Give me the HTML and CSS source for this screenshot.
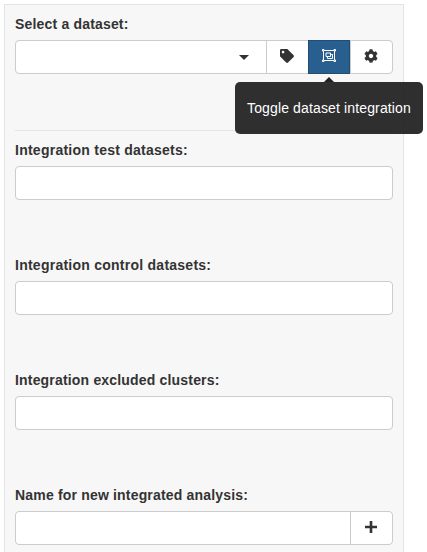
FILE: index.html
```html
<!DOCTYPE html>
<html lang="en">
<head>
<meta charset="utf-8">
<title>Datasets</title>
<link rel="stylesheet" href="styles.css">
</head>
<body>
<form class="well">
  <div class="group first">
    <label>Select a dataset:</label>
    <div class="control">
      <div class="field select"><svg class="caret" viewBox="0 0 10 5"><path d="M0 0h10L5 5z"/></svg></div>
      <button type="button" class="btn" aria-label="Label"><svg width="14" height="14" viewBox="0 0 512 512"><path d="M0 252.1V48C0 21.5 21.5 0 48 0h204.100c12.700 0 24.900 5.100 33.900 14.100l211.900 211.900c18.700 18.700 18.700 49.100 0 67.900L293.800 497.900c-18.700 18.700-49.100 18.700-67.900 0L14.100 286.100C5.100 277.100 0 264.800 0 252.100zM112 64c-26.500 0-48 21.500-48 48s21.500 48 48 48 48-21.500 48-48-21.500-48-48-48z"/></svg></button>
      <button type="button" class="btn active" aria-label="Integration">
        <svg class="object" width="14" height="13" viewBox="0 0 14 13"><path d="M1.500 1.500h11v10h-11zM4 4h4.500v3.500H4zM8.500 5.500h2v4h-5v-2"/><path class="corners" d="M.5.5h1.500v1.500h-1.500zM12 .5h1.500v1.500h-1.500zM.5 11h1.500v1.500h-1.500zM12 11h1.500v1.500h-1.500z"/></svg>
        <span class="tooltip">Toggle dataset integration</span>
      </button>
      <button type="button" class="btn last" aria-label="Settings"><svg width="14" height="14" viewBox="0 0 512 512"><path d="M487.400 315.700l-42.600-24.600c4.300-23.200 4.300-47 0-70.200l42.600-24.600c4.900-2.800 7.100-8.600 5.500-14-11.100-35.600-30-67.800-54.700-94.600-3.800-4.100-10-5.100-14.800-2.300L380.800 110c-17.900-15.400-38.500-27.300-60.800-35.100V25.800c0-5.600-3.900-10.500-9.400-11.700-36.700-8.200-74.300-7.800-109.200 0-5.500 1.200-9.400 6.100-9.400 11.700V75c-22.200 7.900-42.800 19.800-60.800 35.100L88.700 85.500c-4.900-2.800-11-1.900-14.800 2.300-24.700 26.700-43.600 58.900-54.700 94.600-1.700 5.400.6 11.200 5.500 14L67.300 221c-4.300 23.200-4.300 47 0 70.200l-42.600 24.600c-4.900 2.800-7.100 8.600-5.500 14 11.100 35.600 30 67.800 54.700 94.600 3.800 4.100 10 5.100 14.800 2.300l42.600-24.600c17.900 15.400 38.500 27.300 60.800 35.100v49.200c0 5.600 3.900 10.500 9.400 11.700 36.700 8.200 74.300 7.800 109.200 0 5.500-1.200 9.400-6.100 9.400-11.700v-49.200c22.200-7.900 42.800-19.800 60.800-35.100l42.600 24.600c4.900 2.800 11 1.900 14.800-2.300 24.700-26.700 43.600-58.900 54.700-94.600 1.500-5.500-.7-11.300-5.600-14.100zM256 336c-44.100 0-80-35.900-80-80s35.900-80 80-80 80 35.900 80 80-35.900 80-80 80z"/></svg></button>
    </div>
  </div>
  <hr>
  <div class="group"><label class="wide">Integration test datasets:</label><div class="control"><div class="field full"></div></div></div>
  <div class="group"><label class="wide">Integration control datasets:</label><div class="control"><div class="field full"></div></div></div>
  <div class="group"><label>Integration excluded clusters:</label><div class="control"><div class="field full"></div></div></div>
  <div class="group end"><label>Name for new integrated analysis:</label><div class="control"><div class="field"></div><button type="button" class="btn last" aria-label="Add"><svg class="plus" width="12" height="12" viewBox="0 0 12 12"><path d="M4.700 0h2.600v4.700H12v2.600H7.300V12H4.700V7.300H0V4.700h4.700z"/></svg></button></div></div>
</form>
</body>
</html>
```
FILE: styles.css
```css
* { box-sizing: border-box; }
html { overflow: hidden; background: #fff; }
body { margin: 4px 4px 0; font: 14px/20px "Liberation Sans", sans-serif; color: #333; }
.well { width: 400px; height: 548px; padding: 10px 10px 0; background: #f7f7f7; border: 1px solid #e3e3e3; border-bottom: 0; }
.group { height: 115px; }
.first { height: 90px; }
.end { height: 60px; }
hr { margin: 25px 0 10px; border: 0; border-top: 1px solid #e5e5e5; }
label { display: block; height: 25px; font-weight: bold; line-height: 18px; letter-spacing: 0.18px; white-space: nowrap; }
.wide { letter-spacing: 0.25px; }
.control { display: flex; width: 378px; height: 34px; }
.field { flex: 1; background: #fff; border: 1px solid #ccc; border-radius: 4px 0 0 4px; }
.full { border-radius: 4px; }
.select { display: flex; justify-content: flex-end; align-items: center; padding-right: 17px; }
.caret { width: 10px; height: 5px; }
.btn { position: relative; display: flex; justify-content: center; align-items: center; width: 43px; margin-left: -1px; padding: 0 2px 2px 0; background: #fff; border: 1px solid #ccc; font: inherit; }
.last { border-radius: 0 4px 4px 0; }
.active { z-index: 1; width: 42px; margin-right: 1px; padding: 0; background: #285f8f; border-color: #204d74; }
svg { display: block; fill: #333; }
.object { margin-top: -3px; fill: none; stroke: #fff; stroke-width: 1; }
.object .corners { fill: #285f8f; }
.tooltip { position: absolute; top: 41px; left: -74px; width: 188px; height: 52px; padding: 16px 12px; border-radius: 5px; background: rgba(24, 24, 24, .9); color: #fff; font-size: 14px; letter-spacing: 0.14px; line-height: 20px; text-align: left; white-space: nowrap; }
.tooltip::before { content: ""; position: absolute; top: -5px; left: 89px; border: 5px solid transparent; border-top: 0; border-bottom-color: #222; }
```
